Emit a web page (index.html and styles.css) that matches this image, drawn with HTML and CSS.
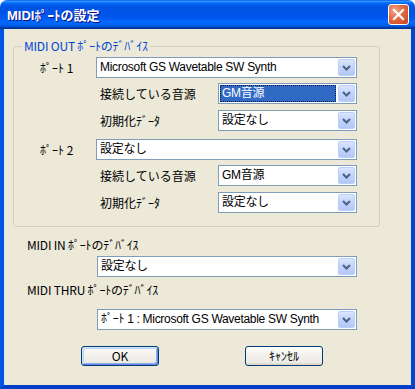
FILE: index.html
```html
<!DOCTYPE html>
<html lang="ja">
  <head>
    <meta charset="UTF-8" />
    <title>MIDIﾎﾟｰﾄの設定</title>
    <link rel="stylesheet" href="styles.css">
  </head>
  <body>
    <div class="window">
      <div class="titlebar">
        <span class="title">MIDIﾎﾟｰﾄの設定</span>
        <span class="close">
          <svg width="13" height="13" viewBox="0 0 13 13"><path d="M2 2 L11 11 M11 2 L2 11" stroke="#fff" stroke-width="2.2" stroke-linecap="square" fill="none"/></svg>
        </span>
      </div>
      <div class="frame">
        <fieldset class="group">
          <legend>MIDI OUT ﾎﾟｰﾄのﾃﾞﾊﾞｲｽ</legend>
          <div class="row port">
            <span class="lbl">ﾎﾟｰﾄ 1</span>
            <div class="combo wide">
              <span class="val">Microsoft GS Wavetable SW Synth</span>
              <span class="drop"><svg width="9" height="6" viewBox="0 0 9 6"><path d="M1 1 L4.5 4.5 L8 1" stroke="#4d6185" stroke-width="2" fill="none"/></svg></span>
            </div>
          </div>
          <div class="row sub first">
            <span class="lbl">接続している音源</span>
            <div class="combo narrow">
              <span class="val selected">GM音源</span>
              <span class="drop"><svg width="9" height="6" viewBox="0 0 9 6"><path d="M1 1 L4.5 4.5 L8 1" stroke="#4d6185" stroke-width="2" fill="none"/></svg></span>
            </div>
          </div>
          <div class="row sub">
            <span class="lbl">初期化ﾃﾞｰﾀ</span>
            <div class="combo narrow">
              <span class="val">設定なし</span>
              <span class="drop"><svg width="9" height="6" viewBox="0 0 9 6"><path d="M1 1 L4.5 4.5 L8 1" stroke="#4d6185" stroke-width="2" fill="none"/></svg></span>
            </div>
          </div>
          <div class="row port second">
            <span class="lbl">ﾎﾟｰﾄ 2</span>
            <div class="combo wide">
              <span class="val">設定なし</span>
              <span class="drop"><svg width="9" height="6" viewBox="0 0 9 6"><path d="M1 1 L4.5 4.5 L8 1" stroke="#4d6185" stroke-width="2" fill="none"/></svg></span>
            </div>
          </div>
          <div class="row sub first">
            <span class="lbl">接続している音源</span>
            <div class="combo narrow">
              <span class="val">GM音源</span>
              <span class="drop"><svg width="9" height="6" viewBox="0 0 9 6"><path d="M1 1 L4.5 4.5 L8 1" stroke="#4d6185" stroke-width="2" fill="none"/></svg></span>
            </div>
          </div>
          <div class="row sub">
            <span class="lbl">初期化ﾃﾞｰﾀ</span>
            <div class="combo narrow">
              <span class="val">設定なし</span>
              <span class="drop"><svg width="9" height="6" viewBox="0 0 9 6"><path d="M1 1 L4.5 4.5 L8 1" stroke="#4d6185" stroke-width="2" fill="none"/></svg></span>
            </div>
          </div>
        </fieldset>

        <div class="section-label in">MIDI IN ﾎﾟｰﾄのﾃﾞﾊﾞｲｽ</div>
        <div class="combo solo">
          <span class="val">設定なし</span>
          <span class="drop"><svg width="9" height="6" viewBox="0 0 9 6"><path d="M1 1 L4.5 4.5 L8 1" stroke="#4d6185" stroke-width="2" fill="none"/></svg></span>
        </div>

        <div class="section-label thru">MIDI THRU ﾎﾟｰﾄのﾃﾞﾊﾞｲｽ</div>
        <div class="combo solo">
          <span class="val">ﾎﾟｰﾄ 1 : Microsoft GS Wavetable SW Synth</span>
          <span class="drop"><svg width="9" height="6" viewBox="0 0 9 6"><path d="M1 1 L4.5 4.5 L8 1" stroke="#4d6185" stroke-width="2" fill="none"/></svg></span>
        </div>

        <div class="buttons">
          <button class="btn default">OK</button>
          <button class="btn">ｷｬﾝｾﾙ</button>
        </div>
      </div>
    </div>
  </body>
</html>
```

FILE: styles.css
```css
* {
  box-sizing: border-box;
}
body {
  margin: 0;
  font-family: "Liberation Sans", "Noto Sans CJK JP", sans-serif;
  font-size: 12px;
  color: #000;
  background: #fff;
}
.window {
  width: 415px;
  height: 389px;
  display: flex;
  flex-direction: column;
}
.titlebar {
  height: 29px;
  display: flex;
  align-items: center;
  padding: 0 6px 0 7px;
  border-radius: 7px 7px 0 0;
  background: linear-gradient(to bottom, #0058ee 0%, #3593ff 4%, #288eff 6%, #127dff 8%, #036ffc 10%, #0262ee 14%, #0057e5 20%, #0054e3 24%, #0055eb 56%, #005bf5 66%, #026afe 76%, #0062ef 86%, #0052d6 92%, #0040ab 94%, #003092 100%);
}
.title {
  flex: 1;
  color: #fff;
  font-weight: bold;
  font-size: 13px;
  text-shadow: 1px 1px #0f1089;
}
.close {
  width: 21px;
  height: 21px;
  display: flex;
  align-items: center;
  justify-content: center;
  border: 1px solid #fff;
  border-radius: 3px;
  background: radial-gradient(circle at 30% 30%, #f3a58a 0%, #e2693f 45%, #c4421e 100%);
}
.frame {
  flex: 1;
  background: #ece9d8;
  border-left: 4px solid #0055e5;
  border-right: 4px solid #0048d0;
  border-bottom: 4px solid #0040c8;
  box-shadow: inset 1px 0 #d8e4f8;
  padding-top: 10px;
}
.group {
  margin: 0 0 0 9px;
  width: 367px;
  padding: 4px 0 13px;
  border: 1px solid #d0d0bf;
  border-radius: 3px;
  min-width: 0;
}
.group legend {
  margin-left: 8px;
  padding: 0 2px;
  line-height: 14px;
  color: #0046d5;
  font-family: "Noto Sans CJK JP", sans-serif;
  letter-spacing: -0.2px;
}
.row {
  display: flex;
  align-items: center;
  height: 21px;
  margin-top: 6px;
}
.row:first-of-type {
  margin-top: 0;
}
.row.first {
  margin-top: 5px;
}
.row.second {
  margin-top: 8px;
}
.row .lbl {
  font-family: "Noto Sans CJK JP", sans-serif;
  line-height: 14px;
}
.row.port {
  padding-left: 26px;
}
.row.port .lbl {
  width: 56px;
}
.row.sub {
  padding-left: 86px;
}
.row.sub .lbl {
  width: 118px;
}
.combo {
  display: flex;
  align-items: center;
  height: 21px;
  padding: 1px;
  background: #fff;
  border: 1px solid #7f9db9;
}
.combo.wide {
  width: 261px;
}
.combo.narrow {
  width: 139px;
}
.combo.solo {
  width: 260px;
  margin-left: 93px;
}
.combo .val {
  flex: 1;
  height: 17px;
  line-height: 17px;
  padding-left: 2px;
  letter-spacing: -0.3px;
  white-space: nowrap;
  overflow: hidden;
}
.combo .val.selected {
  margin-right: 2px;
  background: #316ac5;
  color: #fff;
  outline: 1px dotted #0c1c3a;
  outline-offset: -1px;
}
.drop {
  width: 17px;
  height: 17px;
  display: flex;
  align-items: center;
  justify-content: center;
  border: 1px solid #b9cef8;
  border-radius: 2px;
  background: linear-gradient(to bottom, #dbe5fd 0%, #c1d3fb 50%, #b4c8f6 100%);
}
.section-label {
  margin-left: 23px;
  line-height: 14px;
  font-family: "Noto Sans CJK JP", sans-serif;
  letter-spacing: -0.2px;
}
.section-label.in {
  margin-top: 11px;
  margin-bottom: 4px;
}
.section-label.thru {
  margin-top: 6px;
  margin-bottom: 12px;
}
.buttons {
  display: flex;
  gap: 86px;
  margin: 16px 0 0 77px;
}
.btn {
  width: 78px;
  height: 20px;
  padding: 0;
  font: inherit;
  font-family: "Noto Sans CJK JP", sans-serif;
  line-height: 16px;
  color: #000;
  border: 1px solid #003c74;
  border-radius: 3px;
  background: linear-gradient(to bottom, #ffffff 0%, #f3f2ee 40%, #ecebe6 85%, #d6d0c5 100%);
}
.btn.default {
  box-shadow: inset 1px 1px #cee7ff, inset -1px -1px #6982ee, inset 2px 2px #bcd4f6, inset -2px -2px #89ade4;
}
```
